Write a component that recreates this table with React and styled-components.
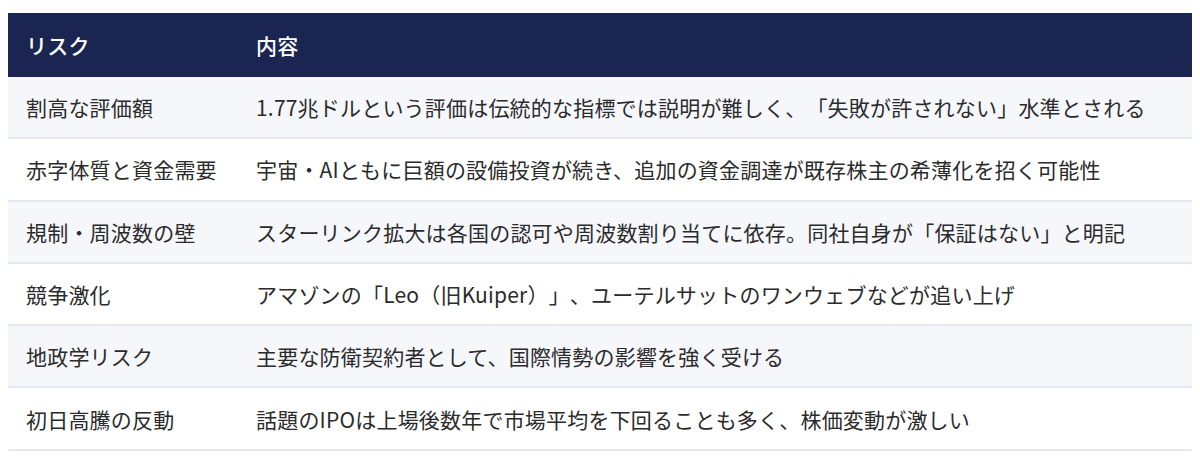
import React from "react";
import styled, { createGlobalStyle } from "styled-components";

const GlobalStyle = createGlobalStyle`
  body {
    margin: 0;
    background: #ffffff;
    font-family: "Noto Sans CJK JP", "Noto Sans", sans-serif;
  }
`;

const Wrap = styled.div`
  padding: 13px 8px 0 8px;
`;

const Table = styled.table`
  width: 100%;
  table-layout: fixed;
  border-collapse: collapse;
  font-size: 21px;
  letter-spacing: 0.2px;
  color: #2b2b2b;
  text-spacing-trim: space-all;
`;

const HeadCell = styled.th`
  background: #1b2551;
  color: #ffffff;
  font-weight: 500;
  text-align: left;
  height: 64px;
  padding: 0 18px;
  box-sizing: border-box;
  width: ${({ $w }) => $w || "auto"};
`;

const Row = styled.tr`
  background: ${({ $alt }) => ($alt ? "#f6f7fb" : "#ffffff")};
  border-bottom: 2px solid #e6e8f0;
`;

const Cell = styled.td`
  height: 60.3px;
  padding: 0 18px;
  white-space: nowrap;
`;

const rows = [
  ["割高な評価額", "1.77兆ドルという評価は伝統的な指標では説明が難しく、「失敗が許されない」水準とされる"],
  ["赤字体質と資金需要", "宇宙・AIともに巨額の設備投資が続き、追加の資金調達が既存株主の希薄化を招く可能性"],
  ["規制・周波数の壁", "スターリンク拡大は各国の認可や周波数割り当てに依存。同社自身が「保証はない」と明記"],
  ["競争激化", "アマゾンの「Leo（旧Kuiper）」、ユーテルサットのワンウェブなどが追い上げ"],
  ["地政学リスク", "主要な防衛契約者として、国際情勢の影響を強く受ける"],
  ["初日高騰の反動", "話題のIPOは上場後数年で市場平均を下回ることも多く、株価変動が激しい"],
];

export default function App() {
  return (
    <>
      <GlobalStyle />
      <Wrap>
        <Table>
          <thead>
            <tr>
              <HeadCell $w="230px">リスク</HeadCell>
              <HeadCell>内容</HeadCell>
            </tr>
          </thead>
          <tbody>
            {rows.map(([risk, desc], i) => (
              <Row key={risk} $alt={i % 2 === 0}>
                <Cell>{risk}</Cell>
                <Cell>{desc}</Cell>
              </Row>
            ))}
          </tbody>
        </Table>
      </Wrap>
    </>
  );
}
